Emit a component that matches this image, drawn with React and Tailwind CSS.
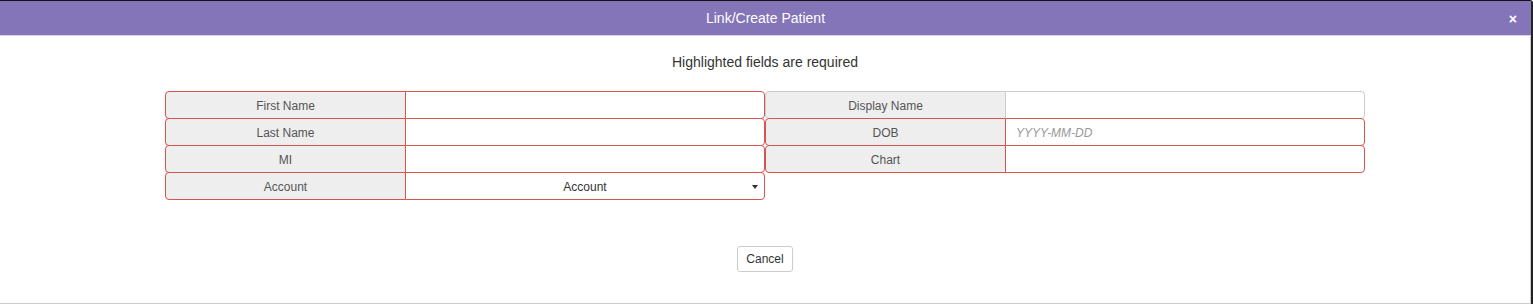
const RED = 'border-[#d9534f]';
const GRAY = 'border-[#cccccc]';

function Field({ label, required, placeholder, select, className = '' }) {
  const b = required ? RED : GRAY;
  return (
    <div className={`flex h-[28px] ${className}`}>
      <div
        className={`w-[241px] shrink-0 flex items-center justify-center pt-px border ${b} bg-[#eeeeee] rounded-l-[4px] text-[12px] text-[#555555]`}
      >
        {label}
      </div>
      <div
        className={`relative flex-1 -ml-px flex items-center pt-px border ${b} bg-white rounded-r-[4px] text-[12px]`}
      >
        {select ? (
          <>
            <span className="flex-1 text-center text-[#333333]">{select}</span>
            <span className="absolute right-[6px] top-[12px] w-0 h-0 border-l-[3px] border-r-[3px] border-t-[4px] border-l-transparent border-r-transparent border-t-[#333333]" />
          </>
        ) : (
          <span className="pl-[10px] italic text-[#999999]">{placeholder}</span>
        )}
      </div>
    </div>
  );
}

export default function App() {
  return (
    <div
      className="w-[1533px] h-[305px] bg-white overflow-hidden"
      style={{ fontFamily: '"Liberation Sans", Arial, sans-serif' }}
    >
      <div className="w-[1533px] h-[304px] border-t border-[#111111] border-r-2 border-r-[#222222] rounded-tr-[3px] flex flex-col">
        <div className="h-[35px] bg-[#8474b8] border-b border-[#d6d0e8] flex items-center relative">
          <div className="flex-1 text-center text-white text-[14px]">Link/Create Patient</div>
          <span className="absolute right-[14px] top-[8px] text-white text-[14px] font-bold">×</span>
        </div>
        <div className="flex-1 border-r border-b border-[#cccccc] flex flex-col items-center">
          <p className="mt-[16px] text-[14px] leading-[20px] text-[#333333]">Highlighted fields are required</p>
          <div className="mt-[19px] w-[1200px] grid grid-cols-2">
            <div className="flex flex-col">
              <Field label="First Name" required />
              <Field label="Last Name" required className="-mt-px" />
              <Field label="MI" required className="-mt-px" />
              <Field label="Account" required select="Account" className="-mt-px" />
            </div>
            <div className="flex flex-col">
              <Field label="Display Name" />
              <Field label="DOB" required placeholder="YYYY-MM-DD" className="-mt-px" />
              <Field label="Chart" required className="-mt-px" />
            </div>
          </div>
          <button className="mt-[46px] h-[26px] w-[56px] border border-[#cccccc] rounded-[3px] bg-white text-[12px] text-[#333333]">
            Cancel
          </button>
        </div>
      </div>
    </div>
  );
}
